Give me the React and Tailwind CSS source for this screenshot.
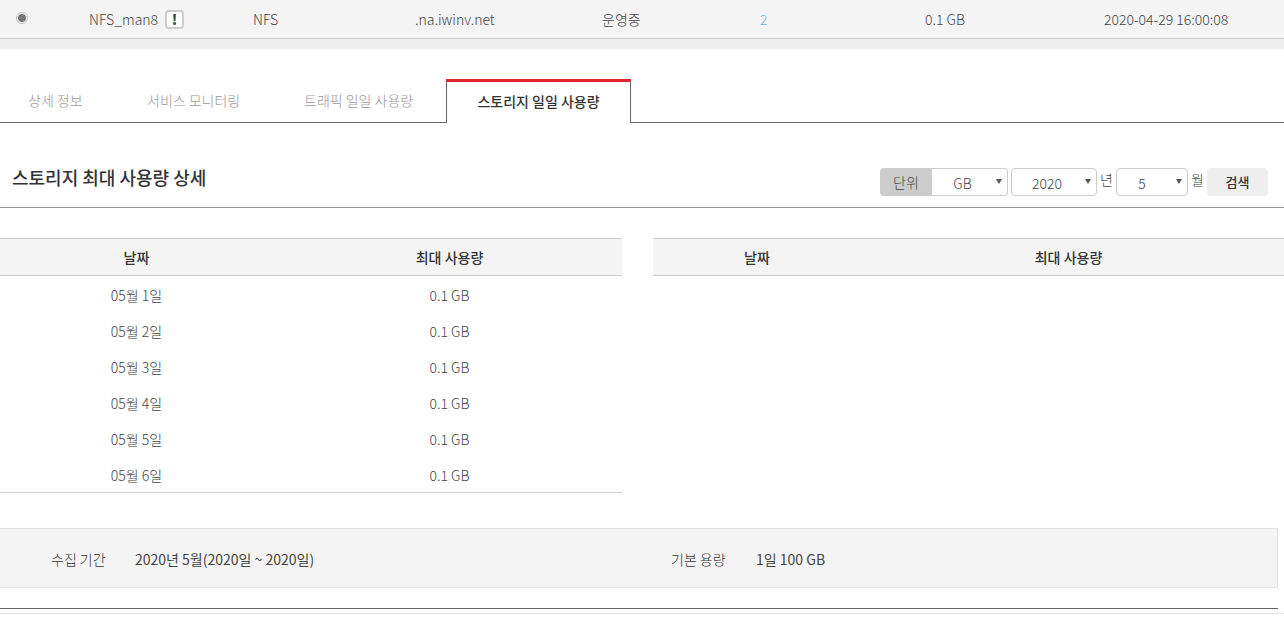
import React from "react";

const FONT = "font-['Noto_Sans_CJK_KR','Noto_Sans',sans-serif]";

const days = ["05월 1일", "05월 2일", "05월 3일", "05월 4일", "05월 5일", "05월 6일"];

function SelectBox({ value, className, textPad }) {
  return (
    <div className={`relative h-[28px] flex items-center justify-center bg-white border border-[#ccc] ${className}`}>
      <span className={`text-[14px] text-[#444] pt-[2px] ${textPad}`}>{value}</span>
      <span className="absolute right-[5px] top-[10px] w-0 h-0 border-l-[3px] border-r-[3px] border-t-[5px] border-l-transparent border-r-transparent border-t-[#555]" />
    </div>
  );
}

function TableHead({ first, second }) {
  return (
    <div className="flex h-[38px] items-center bg-[#f4f4f4] border-y border-[#ccc] text-[14px] font-medium text-[#333]">
      <div className={first}>날짜</div>
      <div className={second}>최대 사용량</div>
    </div>
  );
}

export default function App() {
  return (
    <div className={`${FONT} w-[1284px] h-[618px] overflow-hidden bg-white text-[14px] text-[#444] font-light`}>
      {/* 선택된 서비스 행 */}
      <div className="h-[49px] bg-[#eeeeee]">
        <div className="h-[39px] flex items-center bg-[#f4f4f4] border-b border-[#ccc]">
          <div className="w-[44px] pl-[16px] pb-[2px]">
            <div className="w-[12px] h-[12px] rounded-full border border-[#bbb] bg-white flex items-center justify-center">
              <div className="w-[8px] h-[8px] rounded-full bg-[#777]" />
            </div>
          </div>
          <div className="w-[209px] flex items-center pl-[45px] gap-[7px]">
            <span>NFS_man8</span>
            <span className="w-[19px] h-[19px] rounded-[4px] border-2 border-[#ccc] bg-white flex items-center justify-center text-[14px] font-black text-[#444]">!</span>
          </div>
          <div className="w-[162px]">NFS</div>
          <div className="w-[187px]">.na.iwinv.net</div>
          <div className="w-[158px]">운영중</div>
          <div className="w-[165px] text-[#6cb2d9]">2</div>
          <div className="w-[179px]">0.1 GB</div>
          <div>2020-04-29 16:00:08</div>
        </div>
      </div>

      {/* 탭 */}
      <div className="mt-[30px] h-[44px] flex border-b border-[#666] text-[14px] text-[#999]">
        <div className="w-[111px] pl-[28px] pt-[11px]">상세 정보</div>
        <div className="w-[157px] pl-[36px] pt-[11px]">서비스 모니터링</div>
        <div className="w-[178px] pl-[36px] pt-[11px]">트래픽 일일 사용량</div>
        <div className="w-[185px] h-[44px] border-t-[3px] border-t-[#e5232e] border-x border-x-[#666] bg-white text-center pt-[9px] font-medium text-[#333]">스토리지 일일 사용량</div>
      </div>

      {/* 제목 + 검색 */}
      <div className="h-[85px] flex items-start justify-between border-b border-[#999]">
        <h2 className="pl-[12px] pt-[39px] text-[18px] font-medium text-[#333] leading-[30px]">스토리지 최대 사용량 상세</h2>
        <div className="flex items-center mt-[45px] mr-[16px]">
          <div className="w-[52px] h-[28px] bg-[#ccc] rounded-l-[4px] flex items-center justify-center">단위</div>
          <SelectBox value="GB" className="w-[76px] border-l-0 rounded-r-[4px]" textPad="pr-[14px]" />
          <SelectBox value="2020" className="w-[86px] ml-[3px] rounded-[4px]" textPad="pr-[14px]" />
          <span className="w-[19px] text-center pb-[6px]">년</span>
          <SelectBox value="5" className="w-[72px] rounded-[4px]" textPad="pr-[20px]" />
          <span className="w-[19px] text-center pb-[6px]">월</span>
          <div className="w-[61px] h-[28px] bg-[#eee] rounded-[4px] flex items-center justify-center font-medium text-[#333] text-[13px]">검색</div>
        </div>
      </div>

      {/* 일별 표 */}
      <div className="mt-[30px] flex items-start gap-[31px]">
        <div className="w-[622px]">
          <TableHead first="w-[273px] text-center" second="w-[349px] pl-[4px] text-center" />
          <div className="border-b border-[#ccc]">
            {days.map((d) => (
              <div key={d} className="h-[36px] flex items-center pt-[2px]">
                <div className="w-[273px] text-center">{d}</div>
                <div className="w-[349px] pl-[4px] text-center">0.1 GB</div>
              </div>
            ))}
          </div>
        </div>
        <div className="flex-1">
          <TableHead first="w-[208px] text-center" second="flex-1 pr-[8px] text-center" />
        </div>
      </div>

      {/* 수집 기간 */}
      <div className="mt-[35px] w-[1278px] h-[60px] flex items-center pt-[2px] bg-[#f4f4f4] border border-l-0 border-[#e2e2e2] text-[#333]">
        <div className="w-[135px] pl-[51px]">수집 기간</div>
        <div className="w-[536px] font-normal text-[#444]">2020년 5월(2020일 ~ 2020일)</div>
        <div className="w-[85px]">기본 용량</div>
        <div className="font-normal text-[#444]">1일 100 GB</div>
      </div>

      <div className="mt-[20px] w-[1278px] border-t border-[#666]" />
      <div className="mt-[4px] w-[1284px] border-t border-[#e5e5e5]" />
    </div>
  );
}
